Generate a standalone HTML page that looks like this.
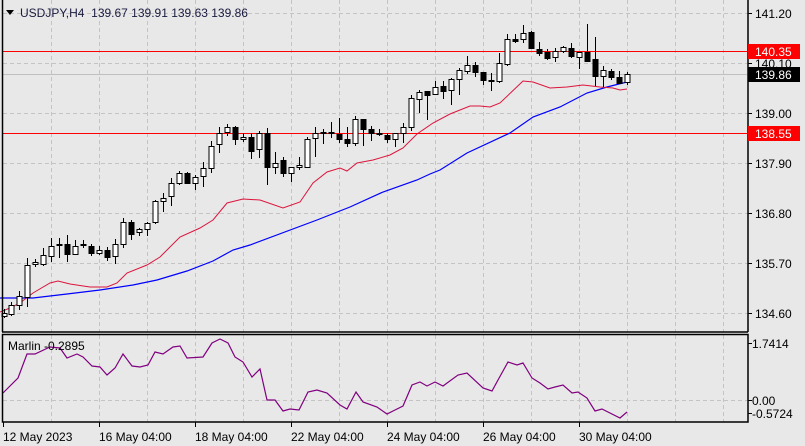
<!DOCTYPE html>
<html><head><meta charset="utf-8"><style>
html,body{margin:0;padding:0;background:#e8e8e8;}
svg{display:block;font-family:"Liberation Sans",Tahoma,sans-serif;}
</style></head><body>
<svg id="s" width="805" height="446" viewBox="0 0 805 446" xmlns="http://www.w3.org/2000/svg">
<rect width="805" height="446" fill="#e8e8e8"/>
<g id="grid" stroke="#c4c4c4" stroke-dasharray="4,3" stroke-width="1"></g>
<line x1="3" y1="74.5" x2="747" y2="74.5" stroke="#c0c0c0"/>
<line x1="3" y1="51.5" x2="747" y2="51.5" stroke="#ff0000"/>
<line x1="3" y1="133.5" x2="747" y2="133.5" stroke="#ff0000"/>
<polyline fill="none" stroke="#0000ff" stroke-width="1.2" points="0,298 33,298 67,294 100,290 133,285 157,280 187,271 213,261 233,250 250,245 317,220 350,207 383,192 417,180 430,174 440,170 467,153 510,133 533,117 560,107 587,93 607,87 627,82"/>
<polyline fill="none" stroke="#dc143c" stroke-width="1" points="0,312 10,308 20,303 33,293 50,283 58,281 70,284 90,287 107,287 117,283 127,273 147,265 160,257 180,237 200,228 213,220 227,203 243,199 260,200 283,208 300,202 313,183 327,172 340,168 347,171 357,163 373,160 390,155 403,148 417,134 433,123 450,114 470,106 480,106 490,107 500,103 523,81 533,82 550,88 567,87 583,85 600,87 613,88 620,90 627,89"/>
<g id="candles"></g>
<polyline fill="none" stroke="#800080" stroke-width="1.2" points="3,393 18,378 27,354 35,354 50,347 60,348 67,358 77,354 83,357 92,366 100,367 107,375 115,368 123,354 132,366 140,367 148,365 155,352 163,354 173,347 180,346 187,358 203,357 212,343 220,339 228,343 235,357 243,362 252,377 260,369 267,400 275,400 283,411 290,409 299,410 308,392 317,390 327,393 340,405 347,409 356,392 363,402 377,407 387,414 395,410 403,406 412,385 420,382 427,386 435,382 443,386 458,375 467,373 483,388 492,391 498,380 508,362 517,365 523,363 532,378 540,383 548,389 555,387 563,385 572,393 578,392 587,398 595,411 602,409 620,418 627,412"/>
<!-- frames -->
<g stroke="#000" stroke-width="1.5" fill="none">
<line x1="2.5" y1="0" x2="2.5" y2="332"/>
<line x1="748" y1="0" x2="748" y2="332"/>
<line x1="2" y1="332" x2="748" y2="332"/>
<rect x="2.5" y="334.5" width="745.5" height="87.5"/>
</g>
<g id="ticks" stroke="#000"></g>
<text x="20" y="17" font-size="12" fill="#1a1a40">USDJPY,H4&#160;&#160;139.67 139.91 139.63 139.86</text>
<polygon points="6,10 14,10 10,15" fill="#000"/>
<text x="8" y="350" font-size="12" fill="#000">Marlin -0.2895</text>
<g font-size="12" fill="#000">
<text x="755" y="18">141.20</text>
<text x="755" y="68">140.10</text>
<text x="755" y="118">139.00</text>
<text x="755" y="168">137.90</text>
<text x="755" y="218">136.80</text>
<text x="755" y="268">135.70</text>
<text x="755" y="318">134.60</text>
<text x="752" y="348">1.7414</text>
<text x="752" y="405">0.00</text>
<text x="752" y="418">-0.5724</text>
</g>
<rect x="748" y="44" width="52" height="15" fill="#ff0000"/>
<text x="755" y="56" font-size="12" fill="#fff">140.35</text>
<rect x="748" y="126" width="52" height="15" fill="#ff0000"/>
<text x="755" y="138" font-size="12" fill="#fff">138.55</text>
<rect x="748" y="67" width="52" height="15" fill="#000"/>
<text x="755" y="79" font-size="12" fill="#fff">139.86</text>
<g font-size="12" fill="#000">
<text x="3" y="441">12 May 2023</text>
<text x="99" y="441">16 May 04:00</text>
<text x="195" y="441">18 May 04:00</text>
<text x="291" y="441">22 May 04:00</text>
<text x="387" y="441">24 May 04:00</text>
<text x="483" y="441">26 May 04:00</text>
<text x="579" y="441">30 May 04:00</text>
</g>
</svg>
<script>
var NS="http://www.w3.org/2000/svg";
function el(p,t,a){var e=document.createElementNS(NS,t);for(var k in a)e.setAttribute(k,a[k]);p.appendChild(e);return e;}
var g=document.getElementById('grid');
for(var k=1;k<=15;k++){var x=3+48*k+.5;el(g,'line',{x1:x,y1:0,x2:x,y2:332});el(g,'line',{x1:x,y1:335,x2:x,y2:422});}
[13,63,113,163,213,263,313].forEach(function(y){el(g,'line',{x1:3,y1:y+.5,x2:747,y2:y+.5});});
el(g,'line',{x1:3,y1:400.5,x2:747,y2:400.5});
var t=document.getElementById('ticks');
[13,63,113,163,213,263,313].forEach(function(y){el(t,'line',{x1:748,y1:y+.5,x2:752,y2:y+.5});});
[343,400,413].forEach(function(y){el(t,'line',{x1:748,y1:y+.5,x2:752,y2:y+.5});});
[3,99,195,291,387,483,579].forEach(function(x){el(t,'line',{x1:x+.5,y1:422,x2:x+.5,y2:427});});
var C=[[4,313,316,309,318,0],[11,305,314,302,316,0],[19,296,305,291,310,0],[27,265,297,258,307,0],[35,262,264,259,267,0],[43,255,264,248,266,0],[51,246,256,238,262,0],[59,244,245,238,258,1],[67,244,254,235,262,1],[75,246,254,240,255,0],[83,244,245,240,248,1],[91,246,253,244,256,1],[99,250,253,246,255,0],[107,250,257,247,261,1],[115,244,256,239,264,0],[123,222,244,218,248,0],[131,222,234,220,240,1],[139,229,232,228,236,0],[147,223,229,222,236,0],[155,201,222,200,224,0],[163,198,201,193,212,0],[171,183,196,178,206,0],[179,173,183,171,185,0],[187,173,183,172,183,1],[195,177,183,175,190,0],[203,168,176,162,187,0],[211,146,168,141,173,0],[219,133,144,127,153,0],[227,127,132,124,136,0],[235,127,139,126,145,1],[243,137,139,133,142,0],[251,137,151,133,159,1],[259,133,149,131,158,0],[267,133,167,128,185,1],[275,163,167,152,174,0],[283,160,173,157,177,1],[291,167,173,167,182,0],[299,165,167,157,170,0],[307,139,167,137,167,0],[315,133,138,127,157,0],[323,132,133,129,144,0],[331,132,133,122,138,1],[339,134,139,118,143,1],[347,139,143,127,147,1],[355,119,143,116,146,0],[363,119,129,119,146,1],[371,129,133,126,141,1],[379,133,134,129,136,1],[387,135,139,133,143,1],[395,133,139,133,147,0],[403,127,133,123,143,0],[411,98,127,95,131,0],[419,92,99,90,113,0],[427,91,95,91,120,1],[435,87,94,81,95,0],[443,86,91,81,99,1],[451,79,90,78,105,0],[459,70,79,68,95,0],[467,65,71,56,74,0],[475,65,72,62,77,1],[483,72,80,72,85,1],[491,80,81,73,91,1],[499,63,81,53,83,0],[507,39,64,34,66,0],[515,39,41,34,43,1],[523,33,39,25,43,0],[531,32,48,31,49,1],[539,49,53,42,56,1],[547,52,58,49,60,1],[555,51,57,48,62,0],[563,47,51,46,53,0],[571,48,56,43,58,1],[579,52,57,52,69,0],[587,52,61,24,62,1],[595,59,76,37,86,1],[603,70,76,66,87,0],[611,71,77,69,80,1],[619,77,83,71,84,1],[627,74,82,72,85,0]];
var cg=document.getElementById('candles');
C.forEach(function(c){
 el(cg,'line',{x1:c[0]+.5,y1:c[3],x2:c[0]+.5,y2:c[4],stroke:'#000','stroke-width':1});
 var h=Math.max(c[2]-c[1],1);
 el(cg,'rect',{x:c[0]-2,y:c[1]+.5,width:5,height:h,fill:c[5]?'#000':'#fff',stroke:'#000','stroke-width':1});
});
</script>
</body></html>
